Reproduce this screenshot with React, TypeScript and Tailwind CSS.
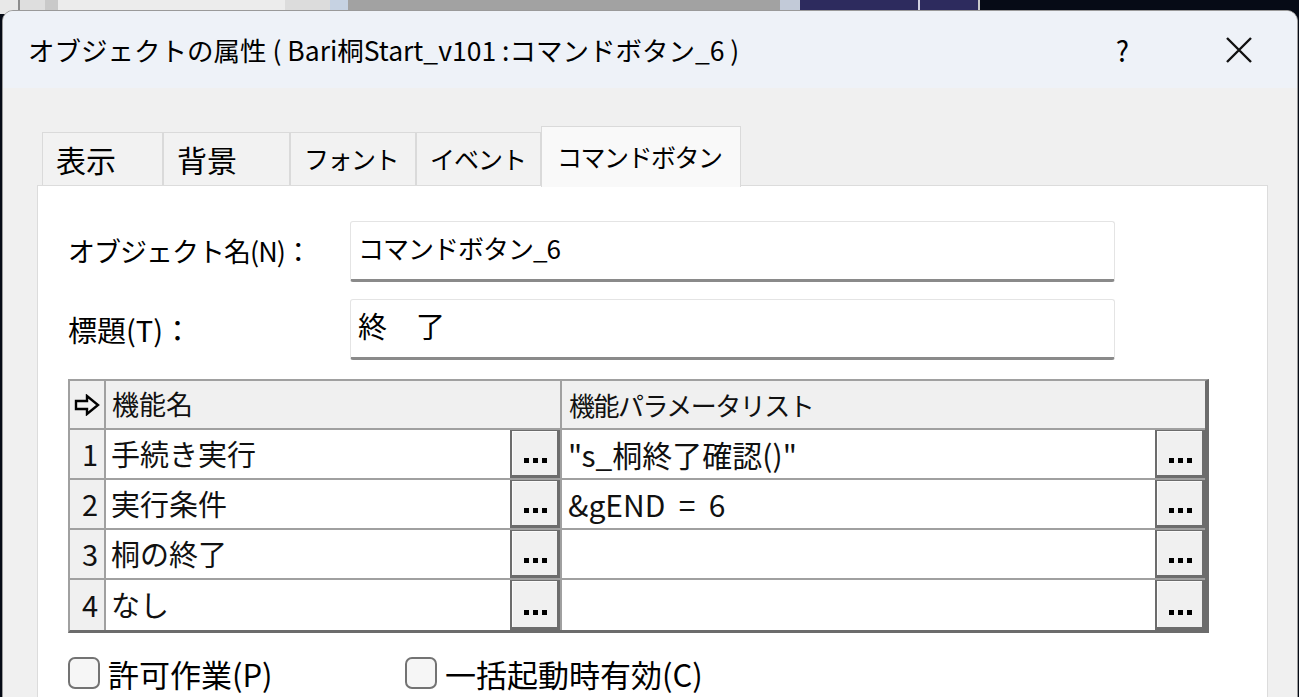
import React from "react";

const font = { fontFamily: '"Noto Sans CJK JP", "Noto Sans", sans-serif' };

const tabs = [
  { label: "表示", w: "w-[121px]", cls: "text-[30px]" },
  { label: "背景", w: "w-[127px]", cls: "text-[30px]" },
  { label: "フォント", w: "w-[126px]", cls: "text-[25px] tracking-[-1.5px]" },
  { label: "イベント", w: "w-[125px]", cls: "text-[25px] tracking-[-1px]" },
];

const rows = [
  { no: "1", name: "手続き実行", param: '"s_桐終了確認()"' },
  { no: "2", name: "実行条件", param: "&gEND  =  6" },
  { no: "3", name: "桐の終了", param: "" },
  { no: "4", name: "なし", param: "" },
];

function Dots() {
  return (
    <div className="flex-1 flex items-end justify-center gap-[4px] pb-[12px] bg-[#f0f0f0] border-t border-l border-[#fafafa]">
      <span className="w-[5px] h-[5px] bg-black" />
      <span className="w-[5px] h-[5px] bg-black" />
      <span className="w-[5px] h-[5px] bg-black" />
    </div>
  );
}

function EllipsisButton() {
  // dark 3D frame round the "..." cell
  return (
    <div className="w-[50px] h-full flex bg-[#6c6c6c] pl-[2px] pt-[1px] pr-[3px] pb-[3px]">
      <Dots />
    </div>
  );
}

function Checkbox({ label }: { label: string }) {
  return (
    <div className="flex items-center gap-[8px]">
      <div className="w-[32px] h-[32px] rounded-[7px] border-2 border-[#737373] bg-[#f6f6f6]" />
      <span className="text-[31px] leading-none text-black">{label}</span>
    </div>
  );
}

export default function App() {
  return (
    <div className="relative w-[1299px] h-[697px] overflow-hidden bg-[#060b16]" style={font}>
      {/* window behind the dialog */}
      <div className="flex h-[14px]">
        <div className="w-[18px] bg-[#e8e8e8]" />
        <div className="w-[2px] bg-[#8c8c8c]" />
        <div className="w-[25px] bg-[#dedede]" />
        <div className="w-[13px] bg-[#c9c9c9]" />
        <div className="w-[227px] bg-[#ececec]" />
        <div className="w-[45px] bg-[#dcdcdc]" />
        <div className="w-[18px] bg-[#c6d2e2]" />
        <div className="w-[432px] bg-[#a2a2a2]" />
        <div className="w-[20px] bg-[#c2cad8]" />
        <div className="w-[118px] bg-[#2d2b5e]" />
        <div className="w-[2px] bg-[#d0d0e0]" />
        <div className="w-[58px] bg-[#2d2b5e]" />
        <div className="w-[2px] bg-[#c8c8c8]" />
        <div className="flex-1 bg-[#060b16]" />
      </div>

      {/* dialog */}
      <div className="absolute left-[2px] top-[10px] w-[1296px] h-[700px] rounded-t-[11px] overflow-hidden border border-[#9a9a9a] bg-[#f0f0f0] flex flex-col">
        <div className="h-[77px] bg-[#eef2f8] flex items-center pl-[25px] pr-[44px]">
          <span className="flex-1 text-[26.5px] text-black">
            オブジェクトの属性 ( Bari桐Start_v101 :コマンドボタン_6 )
          </span>
          <span className="text-[28px] text-black mr-[96px]">?</span>
          <svg width="28" height="28" viewBox="0 0 28 28">
            <path d="M2 2 L26 26 M26 2 L2 26" stroke="#111" strokeWidth="2.4" />
          </svg>
        </div>

        <div className="flex-1 pl-[34px] pt-[36px]">
          {/* tabs */}
          <div className="flex items-end pl-[5px] h-[61px]">
            {tabs.map((t) => (
              <div
                key={t.label}
                className={`${t.w} ${t.cls} h-[53px] bg-[#f2f2f2] border border-b-0 border-[#dadada] flex items-center pl-[13px] text-black`}
              >
                {t.label}
              </div>
            ))}
            <div className="w-[200px] h-[61px] bg-[#f9f9f9] border border-b-0 border-[#dadada] flex items-center pl-[15px] text-[25px] text-black relative top-[2px] z-10 tracking-[-1.5px]">
              コマンドボタン
            </div>
          </div>

          {/* panel */}
          <div className="w-[1231px] h-[520px] bg-white border border-[#dcdcdc] pl-[30px] pt-[35px]">
            <div className="flex items-center h-[61px]">
              <span className="w-[282px] text-[27px] text-black tracking-[-1px]">オブジェクト名(N)：</span>
              <div className="w-[765px] h-[61px] bg-white border border-[#e4e4e4] border-b-[3px] border-b-[#8a8a8a] rounded-[3px] flex items-center pl-[7px] pb-[6px] text-[26px] text-black tracking-[-1px]">
                コマンドボタン_6
              </div>
            </div>
            <div className="flex items-center h-[61px] mt-[17px]">
              <span className="w-[282px] text-[29px] text-black">標題(T)：</span>
              <div className="w-[765px] h-[61px] bg-white border border-[#e4e4e4] border-b-[3px] border-b-[#8a8a8a] rounded-[3px] flex items-center pl-[7px] pb-[6px] text-[29px] text-black">
                終　了
              </div>
            </div>

            {/* function grid */}
            <div className="mt-[19px] w-[1141px] border-t-2 border-l-2 border-[#a0a0a0] border-r-[4px] border-r-[#6c6c6c] border-b-[3px] border-b-[#6c6c6c] text-[#111]">
              <div className="flex h-[49px] bg-[#f0f0f0] border-b-2 border-[#a0a0a0] text-[27px]">
                <div className="w-[36px] flex items-center justify-center border-r-2 border-[#a0a0a0]">
                  <svg width="26" height="22" viewBox="0 0 26 22">
                    <path d="M2 7 H13 V2 L24 11 L13 20 V15 H2 Z" fill="none" stroke="#000" strokeWidth="2.4" strokeLinejoin="miter" />
                  </svg>
                </div>
                <div className="w-[456px] flex items-center pl-[6px] border-r-2 border-[#a0a0a0]">機能名</div>
                <div className="flex-1 flex items-center pl-[7px] text-[26px] tracking-[-1.5px]">機能パラメータリスト</div>
              </div>
              {rows.map((r, i) => (
                <div key={r.no} className={`flex h-[50px] ${i < rows.length - 1 ? "border-b-2 border-[#a0a0a0]" : ""}`}>
                  <div className="w-[36px] bg-[#f0f0f0] flex items-center justify-end pr-[6px] border-r-2 border-[#a0a0a0] text-[29px]">
                    {r.no}
                  </div>
                  <div className="w-[404px] bg-white flex items-center pl-[5px] text-[29px]">{r.name}</div>
                  <EllipsisButton />
                  <div className="w-[2px] bg-[#a0a0a0]" />
                  <div className="flex-1 bg-white flex items-center pl-[6px] text-[30px] whitespace-pre">
                    {r.param}
                  </div>
                  <EllipsisButton />
                </div>
              ))}
            </div>

            <div className="flex items-center mt-[24px]">
              <div className="w-[337px]">
                <Checkbox label="許可作業(P)" />
              </div>
              <Checkbox label="一括起動時有効(C)" />
            </div>
          </div>
        </div>
      </div>
    </div>
  );
}
